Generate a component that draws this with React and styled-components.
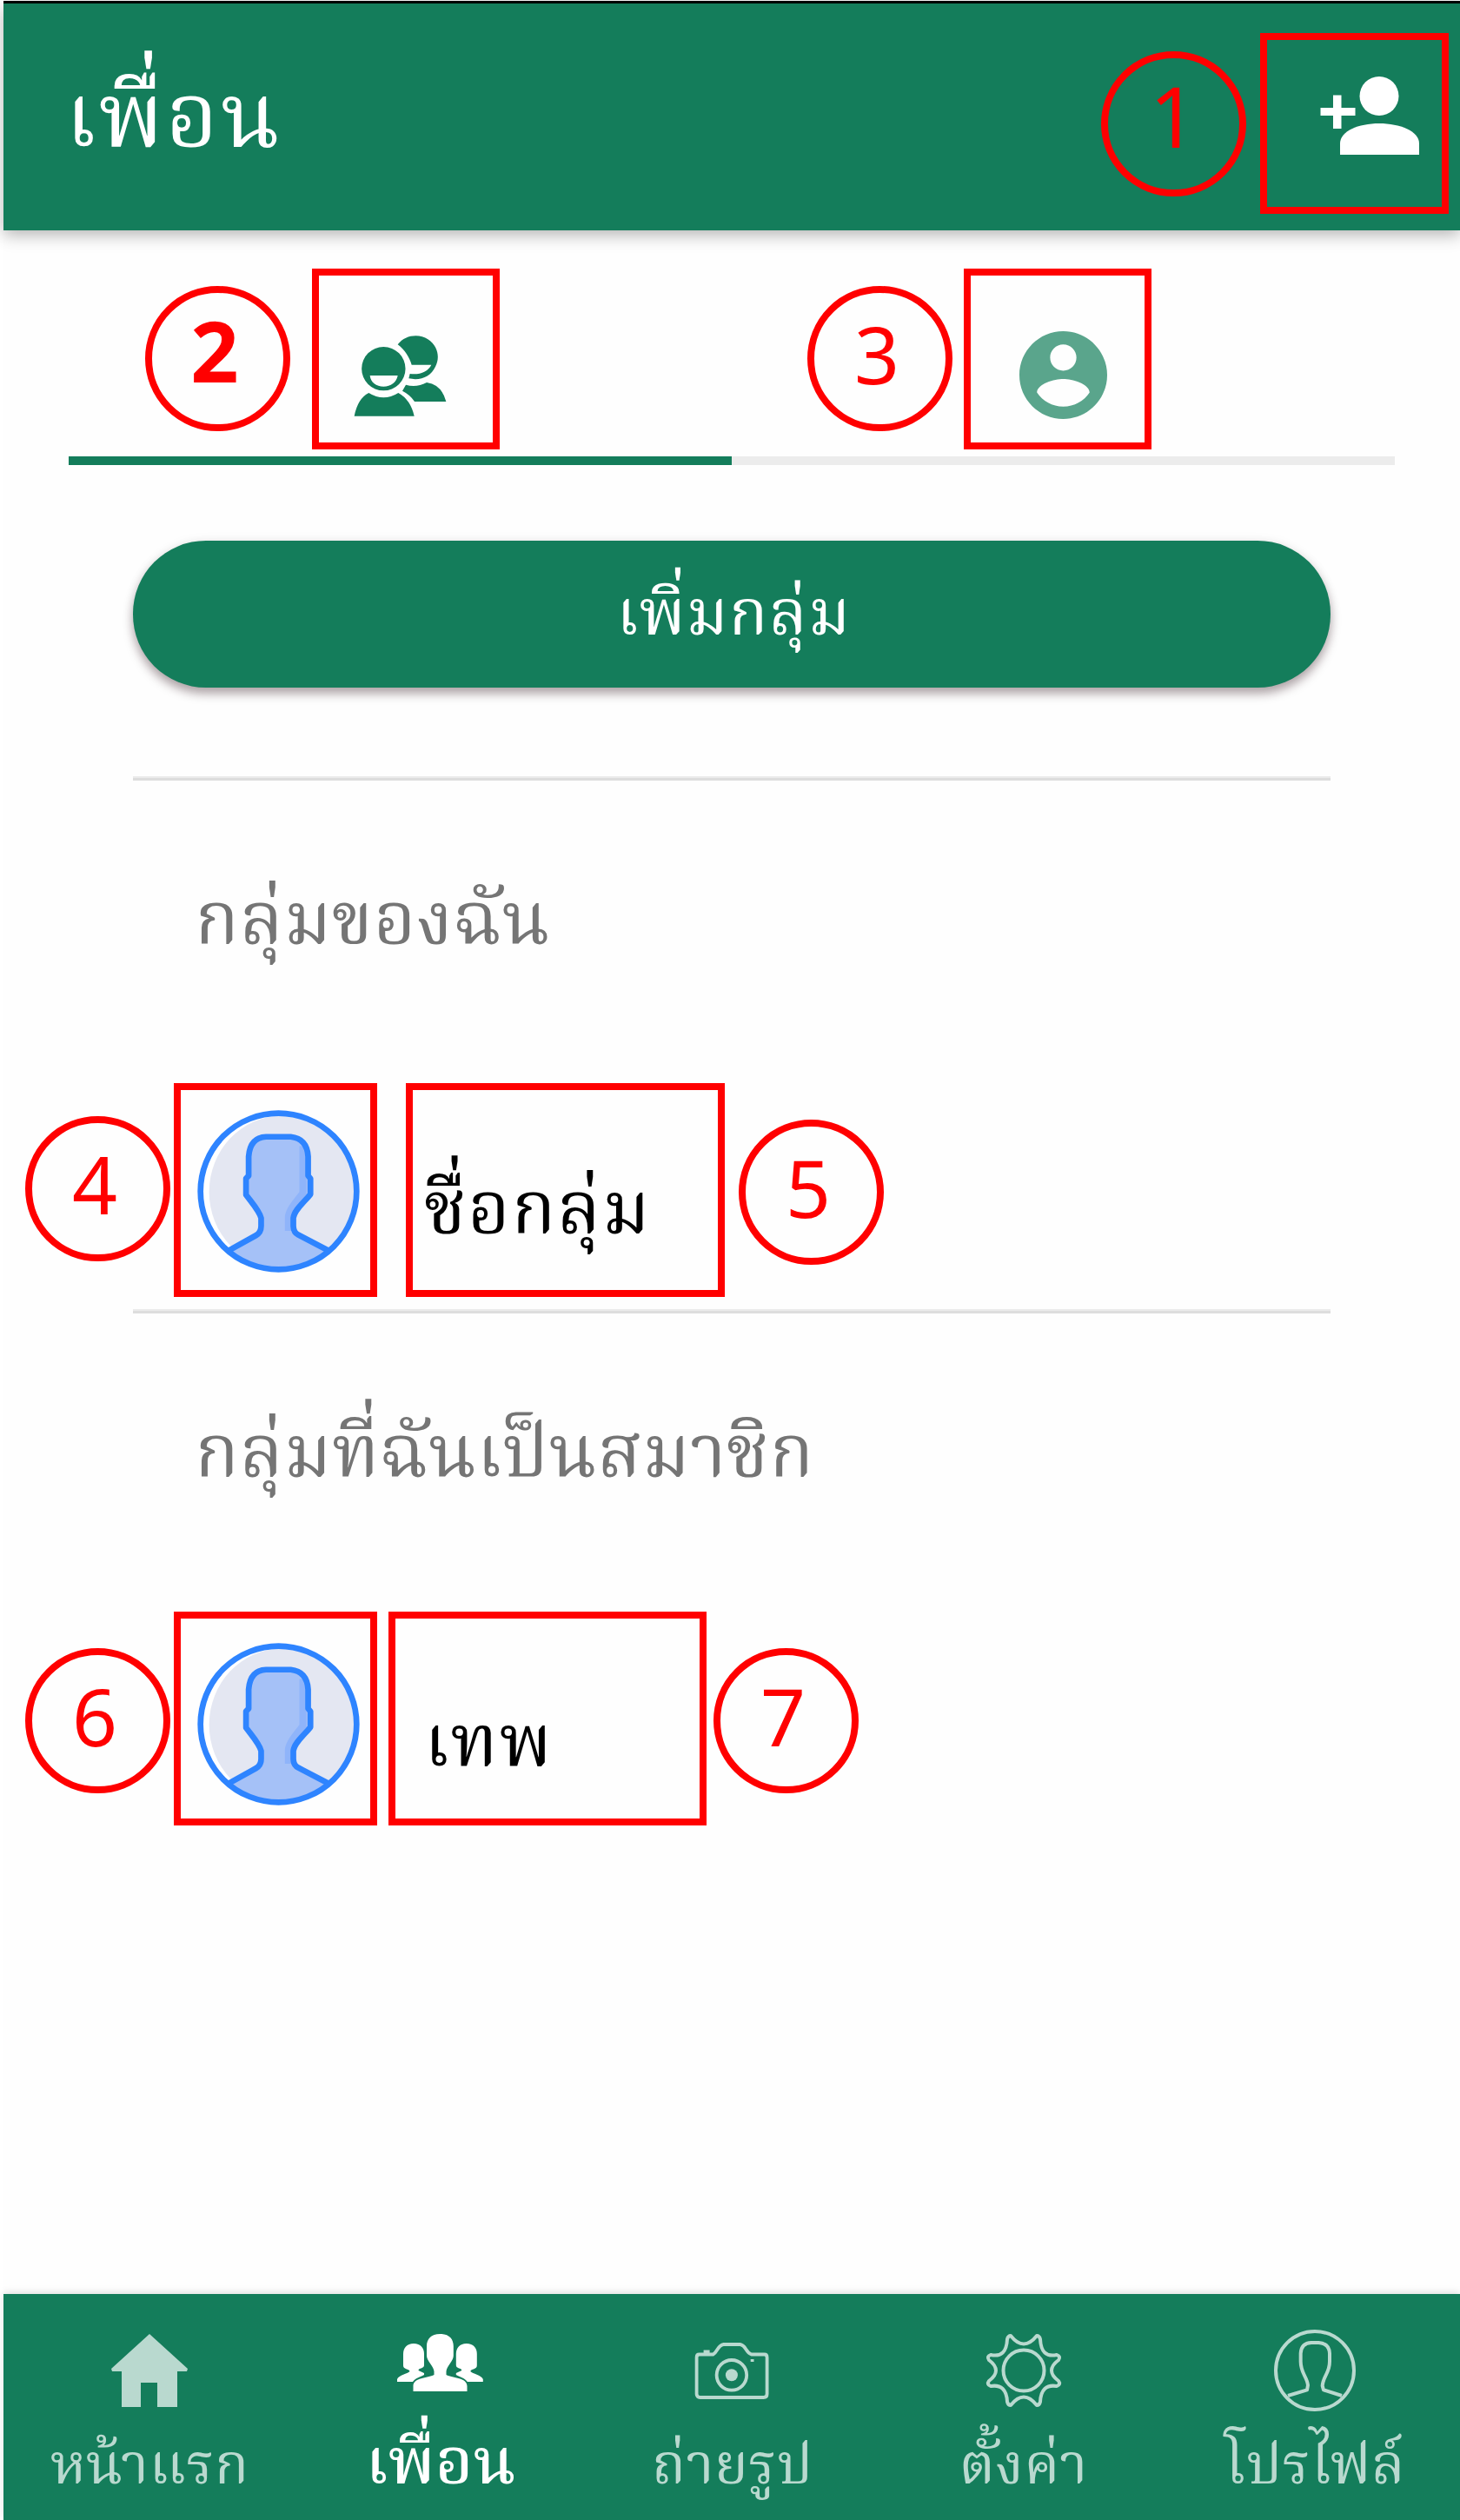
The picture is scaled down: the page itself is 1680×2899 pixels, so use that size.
import React from "react";
import styled, { createGlobalStyle, css } from "styled-components";

const green = "#147d5b";
const muted = "#b9d9cf";
const red = "#ff0000";
const thai = `"Noto Serif Thai", "Noto Sans", serif`;

const GlobalStyle = createGlobalStyle`
  *, *::before, *::after { box-sizing: border-box; }
  body { margin: 0; background: #fff; }
`;

const Screen = styled.div`
  position: relative;
  display: flex;
  flex-direction: column;
  width: 1680px;
  height: 2899px;
  padding: 1px 0 0 4px;
  overflow: hidden;
  background: #fefefe;
  font-family: ${thai};
  box-shadow: inset 4px 0 #fff;
`;

const StatusStrip = styled.div`
  height: 3px;
  flex: none;
  background: #000;
`;

const Header = styled.header`
  display: flex;
  align-items: center;
  justify-content: space-between;
  flex: none;
  height: 261px;
  padding: 0 47px 0 71px;
  background: ${green};
  box-shadow: 0 5px 18px rgba(0, 0, 0, 0.3);
`;

const Title = styled.h1`
  margin: 13px 0 0;
  font-size: 104px;
  line-height: 140px;
  font-weight: 400;
  letter-spacing: 2.5px;
  color: #fff;
`;

const HeaderIcon = styled.svg`
  width: 114px;
  height: 92px;
  margin-bottom: 3px;
  fill: #fff;
`;

const Tabs = styled.div`
  display: grid;
  grid-template-columns: 1fr 1fr;
  flex: none;
  height: 270px;
  margin: 0 75px;
`;

const Tab = styled.button`
  display: flex;
  justify-content: center;
  align-items: flex-start;
  padding: ${(p) => (p.$active ? 120 : 116)}px 0 0;
  border: 0;
  border-bottom: 10px solid ${(p) => (p.$active ? green : "#ececec")};
  background: none;
`;

const Content = styled.main`
  flex: 1;
  display: flex;
  flex-direction: column;
  margin: 87px 149px 0;
`;

const PillButton = styled.button`
  flex: none;
  height: 169px;
  padding: 8px 0 0 4px;
  border: 0;
  border-radius: 84px;
  background: ${green};
  color: #fff;
  font-family: inherit;
  font-size: 74px;
  line-height: 100px;
  letter-spacing: 0.8px;
  box-shadow: 0 7px 12px rgba(40, 10, 20, 0.36), 0 0 14px rgba(0, 0, 0, 0.05);
`;

const Divider = styled.hr`
  flex: none;
  width: 100%;
  height: 5px;
  margin: ${(p) => p.$gap}px 0 0;
  border: 0;
  border-top: 2px solid #ebebeb;
  background: #dddddd;
`;

const Section = styled.section`
  display: flex;
  flex-direction: column;
  padding: 115px 0 0 71px;
`;

const SectionTitle = styled.h2`
  margin: 0;
  font-size: 84px;
  line-height: 100px;
  font-weight: 400;
  letter-spacing: 0.4px;
  color: #757575;
`;

const GroupRow = styled.div`
  display: flex;
  gap: 74px;
  margin: 164px 0 0 3px;
`;

const GroupName = styled.span`
  margin-top: 69px;
  font-size: 84px;
  line-height: 100px;
  letter-spacing: 1.4px;
  color: #000;
`;

const Nav = styled.nav`
  display: grid;
  grid-template-columns: repeat(5, 1fr);
  flex: none;
  height: 260px;
  background: ${green};
  box-shadow: 0 -2px 8px rgba(0, 0, 0, 0.12);
`;

const NavItem = styled.div`
  display: flex;
  flex-direction: column;
  align-items: center;
  gap: 23px;
  padding: 38px 0 0 1px;
  color: ${(p) => (p.$active ? "#fff" : muted)};
`;

const NavLabel = styled.span`
  font-size: 65px;
  line-height: 80px;
  letter-spacing: 0.3px;
  white-space: nowrap;
  ${(p) =>
    p.$active &&
    css`
      font-size: 74px;
      line-height: 76px;
      font-weight: 500;
    `}
`;

const Frame = styled.div`
  position: absolute;
  left: ${(p) => p.$x}px;
  top: ${(p) => p.$y}px;
  width: ${(p) => p.$w}px;
  height: ${(p) => p.$h}px;
  border: 8px solid ${red};
`;

const Badge = styled.div`
  position: absolute;
  left: ${(p) => p.$x}px;
  top: ${(p) => p.$y}px;
  display: flex;
  align-items: center;
  justify-content: center;
  width: 167px;
  height: 167px;
  padding: 0 ${(p) => (p.$n === 1 ? 0 : 7)}px ${(p) => (p.$n < 3 ? 21 : 12)}px 0;
  border: 8px solid ${red};
  border-radius: 50%;
  color: ${red};
  font-family: "Noto Sans", "Open Sans", sans-serif;
  font-size: ${(p) => (p.$n < 3 ? 97 : 91)}px;
  line-height: 100px;
  font-weight: ${(p) => (p.$n === 2 ? 700 : 400)};
`;

const AddPersonIcon = () => (
  <HeaderIcon viewBox="1519 87 114 92">
    <circle cx="1587" cy="110.5" r="22.500" />
    <path d="M1542 178V165C1542 151 1563 142 1587 142S1633 151 1633 165V178Z" />
    <path d="M1534 109.500h9.500v14.500h16v9h-16v15h-9.500v-15h-14.500v-9h14.500z" />
  </HeaderIcon>
);

const PeopleIcon = () => (
  <svg width="106.700" height="94.700" viewBox="36 42 320 284" fill={green}>
    <path d="M188 76C214 42 262 38 292 58C328 82 334 122 318 152C302 186 268 202 226 193L230 177C264 182 294 168 304 146H236C228 120 214 96 188 76Z" />
    <path d="M204 236L216 215Q252 226 288 207Q340 214 355 273H246Q232 250 204 236Z" />
    <path
      fillRule="evenodd"
      d="M139 84A75 75 0 1 1 139 235A75 75 0 1 1 139 84ZM92 183C94 206 114 221 139 221S184 206 188 183Z"
    />
    <path d="M38 323Q50 262 88 243Q139 275 190 243Q232 266 245 323Z" />
  </svg>
);

const AccountIcon = () => (
  <svg width="101" height="101" viewBox="2 2 20 20" fill="#5aa58c">
    <path
      fillRule="evenodd"
      d="M12 2C6.480 2 2 6.480 2 12s4.480 10 10 10 10-4.480 10-10S17.520 2 12 2zm0 3c1.660 0 3 1.340 3 3s-1.340 3-3 3-3-1.340-3-3 1.340-3 3-3zm0 14.200c-2.500 0-4.710-1.280-6-3.220.030-1.990 4-3.080 6-3.080 1.990 0 5.970 1.090 6 3.080-1.290 1.940-3.500 3.220-6 3.220z"
    />
  </svg>
);

const Avatar = () => (
  <svg width="187" height="187" viewBox="38 36 560 560">
    <circle cx="318" cy="316" r="270" fill="#fff" />
    <ellipse cx="329" cy="318" rx="250" ry="262" fill="#e4e7f2" />
    <path
      d="M145 521L240 468Q258 458 258 436V408C252 384 230 360 206 328V272L215 262V196Q220 130 275 128H360Q416 134 420 196V262L428 272V326C404 356 372 380 369 408V436Q370 458 386 466L492 521A270 270 0 0 1 145 521Z"
      fill="#a5c1f7"
    />
    <path d="M402 160V322C384 346 354 378 352 404V452" fill="none" stroke="#8fb4fa" strokeWidth="24" />
    <path
      d="M145 521L240 468Q258 458 258 436V408C252 384 230 360 206 328V272L215 262V196Q220 130 275 128H360Q416 134 420 196V262L428 272V326C404 356 372 380 369 408V436Q370 458 386 466L492 521"
      fill="none"
      stroke="#2e84ff"
      strokeWidth="20"
      strokeLinejoin="round"
    />
    <circle cx="318" cy="316" r="269" fill="none" stroke="#2e84ff" strokeWidth="20" />
  </svg>
);

const NavIcon = ({ children }) => (
  <svg width="100" height="100" viewBox="0 0 100 100" fill="none" stroke="none">
    {children}
  </svg>
);

const HomeIcon = () => (
  <NavIcon>
    <path
      transform="translate(6 8)"
      fill="currentColor"
      d="M44 0L88 40L87 43H76V84H53V56H34V84H12V43H1L0 40Z"
    />
  </NavIcon>
);

const sidePerson =
  "M19 11C27 11 31 16 31 23V36C31 40 24.500 39 24.500 42L31 45V47C26 50 22 50 18 55H0V52C2 47 12 46 14.500 43C14 40 6.500 41 7 36V23C7 16 11 11 19 11Z";

const FriendsIcon = () => (
  <NavIcon>
    <g transform="translate(0 8)" fill="currentColor">
      <path d="M49.400 0C60 0 64.800 6 64.800 14V25C64.800 31 57 37 56.500 43V47C64 51 80.500 50 80.500 60V66H18.500V60C18.500 50 35 51 42.500 47V43C42 37 34 31 34 25V14C34 6 39 0 49.400 0Z" />
      <path d={sidePerson} />
      <path transform="translate(98.800 0) scale(-1 1)" d={sidePerson} />
    </g>
  </NavIcon>
);

const CameraIcon = () => (
  <NavIcon>
    <g transform="translate(7.600 18)" stroke="currentColor" strokeWidth="3.800" strokeLinejoin="round">
      <path d="M5 13.500H21C26 11 26 3 33 2H52C59 3 58 11 65 13.500H80Q83 13.500 83 17V59Q83 63 79 63H6Q2 63 2 59V17Q2 13.500 5 13.500Z" />
      <circle cx="42.300" cy="37.300" r="17.300" />
      <circle cx="42.300" cy="37.300" r="7" fill="currentColor" stroke="none" />
      <path d="M10 10.500h7M66 19v3" />
    </g>
  </NavIcon>
);

const GearIcon = () => (
  <NavIcon>
    <g transform="translate(7 8)" stroke="currentColor" strokeWidth="4" strokeLinejoin="round">
      <path d="M28 2Q43 21 58 2Q61 2 62 6Q63 28 81 24Q86 26 83 30Q67 42 83 54Q86 58 81 60Q63 57 62 78Q61 82 58 82Q43 63 28 82Q25 82 24 78Q23 57 5 60Q0 58 3 54Q19 42 3 30Q0 26 5 24Q23 28 24 6Q25 2 28 2Z" />
      <circle cx="43" cy="42" r="23.500" />
    </g>
  </NavIcon>
);

const ProfileIcon = () => (
  <NavIcon>
    <g
      transform="translate(50 50) scale(.3333) translate(-817 -381)"
      stroke="currentColor"
      strokeWidth="12"
      strokeLinejoin="round"
    >
      <circle cx="817" cy="381" r="135" />
      <path d="M724 468L790 448L793 432C790 402 768 390 768 350V322Q770 286 805 285H830Q866 287 868 322V350C868 390 845 402 843 434L847 448L910 468" />
    </g>
  </NavIcon>
);

const sections = [
  { title: "กลุ่มของฉัน", name: "ชื่อกลุ่ม" },
  { title: "กลุ่มที่ฉันเป็นสมาชิก", name: "เทพ" },
];

const navItems = [
  { label: "หน้าแรก", Icon: HomeIcon },
  { label: "เพื่อน", Icon: FriendsIcon, active: true },
  { label: "ถ่ายรูป", Icon: CameraIcon },
  { label: "ตั้งค่า", Icon: GearIcon },
  { label: "โปรไฟล์", Icon: ProfileIcon },
];

const callouts = [
  { n: 1, badge: [1267, 59], frame: [1450, 38, 217, 208] },
  { n: 2, badge: [167, 329], frame: [359, 309, 216, 208] },
  { n: 3, badge: [929, 329], frame: [1109, 309, 216, 208] },
  { n: 4, badge: [29, 1284], frame: [200, 1246, 234, 246] },
  { n: 5, badge: [850, 1288], frame: [467, 1246, 367, 246] },
  { n: 6, badge: [29, 1896], frame: [200, 1854, 234, 246] },
  { n: 7, badge: [821, 1896], frame: [447, 1854, 366, 246] },
];

export default function App() {
  return (
    <Screen>
      <GlobalStyle />
      <StatusStrip />
      <Header>
        <Title>เพื่อน</Title>
        <AddPersonIcon />
      </Header>
      <Tabs>
        <Tab $active>
          <PeopleIcon />
        </Tab>
        <Tab>
          <AccountIcon />
        </Tab>
      </Tabs>
      <Content>
        <PillButton>เพิ่มกลุ่ม</PillButton>
        {sections.map((s, i) => (
          <React.Fragment key={s.title}>
            <Divider $gap={i === 0 ? 102 : 42} />
            <Section>
              <SectionTitle>{s.title}</SectionTitle>
              <GroupRow>
                <Avatar />
                <GroupName>{s.name}</GroupName>
              </GroupRow>
            </Section>
          </React.Fragment>
        ))}
      </Content>
      <Nav>
        {navItems.map(({ label, Icon, active }) => (
          <NavItem key={label} $active={active}>
            <Icon />
            <NavLabel $active={active}>{label}</NavLabel>
          </NavItem>
        ))}
      </Nav>
      {callouts.map(({ n, badge, frame }) => (
        <React.Fragment key={n}>
          <Badge $n={n} $x={badge[0]} $y={badge[1]}>
            {n}
          </Badge>
          <Frame $x={frame[0]} $y={frame[1]} $w={frame[2]} $h={frame[3]} />
        </React.Fragment>
      ))}
    </Screen>
  );
}
